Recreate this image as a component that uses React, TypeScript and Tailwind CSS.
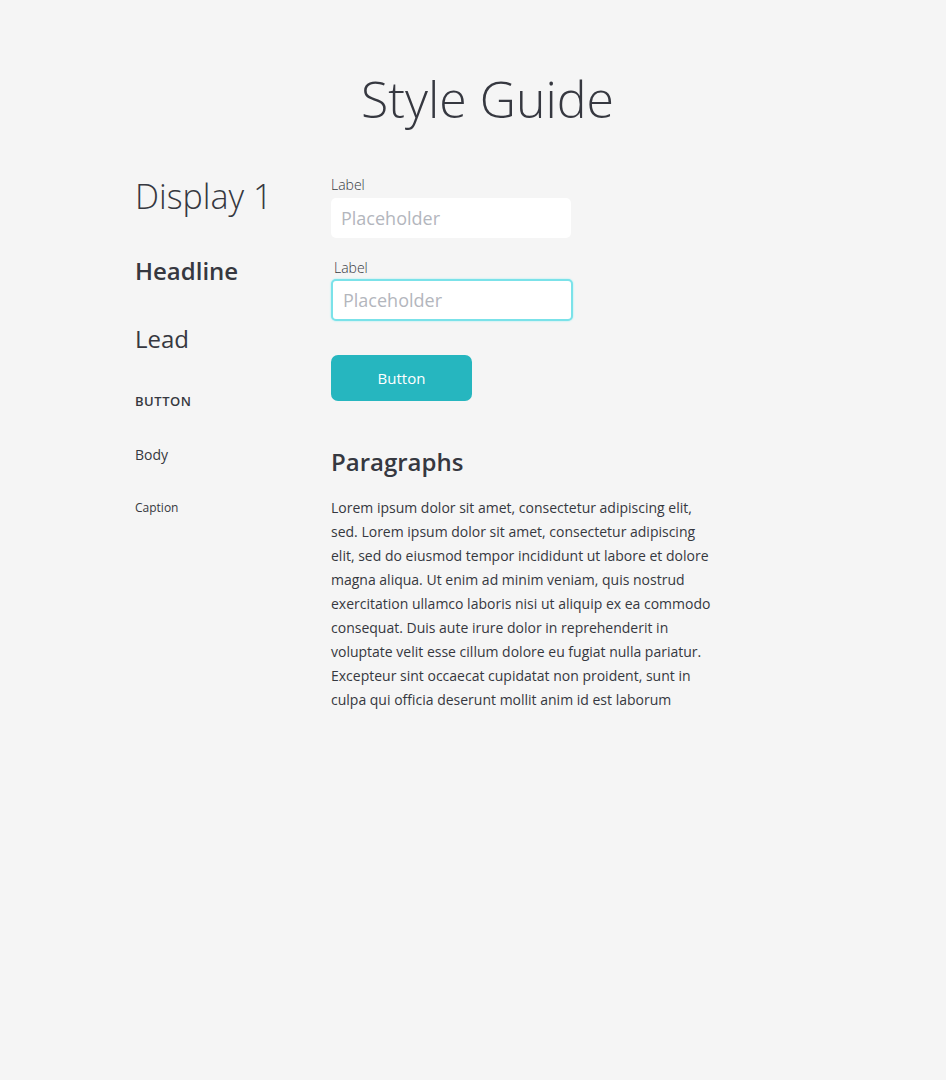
const lorem =
  "Lorem ipsum dolor sit amet, consectetur adipiscing elit, sed. Lorem ipsum dolor sit amet, consectetur adipiscing elit, sed do eiusmod tempor incididunt ut labore et dolore magna aliqua. Ut enim ad minim veniam, quis nostrud exercitation ullamco laboris nisi ut aliquip ex ea commodo consequat. Duis aute irure dolor in reprehenderit in voluptate velit esse cillum dolore eu fugiat nulla pariatur. Excepteur sint occaecat cupidatat non proident, sunt in culpa qui officia deserunt mollit anim id est laborum"

const TypeScale = () => (
  <div className="w-[196px] shrink-0">
    <div className="mt-[1px] text-[34px] leading-[40px] font-light">Display 1</div>
    <div className="mt-[39px] text-[24px] leading-[32px] font-semibold">Headline</div>
    <div className="mt-[36px] text-[24px] leading-[32px] font-normal">Lead</div>
    <div className="mt-[36px] text-[13px] leading-[20px] font-semibold tracking-[0.04em]">BUTTON</div>
    <div className="mt-[34px] text-[14px] leading-[20px] font-normal">Body</div>
    <div className="mt-[33px] text-[12px] leading-[20px] font-normal">Caption</div>
  </div>
)

export default function App() {
  return (
    <div
      className="min-h-screen bg-[#f5f5f5] text-[#363840] pl-[135px]"
      style={{ fontFamily: '"Open Sans", "Noto Sans", sans-serif' }}
    >
      <div className="w-[705px] pt-[71px]">
        <h1 className="text-center text-[50px] leading-[56px] font-light">Style Guide</h1>

        <div className="flex mt-[48px]">
          <TypeScale />

          <div className="flex flex-col">
            <label className="text-[14px] leading-[20px] font-light">Label</label>
            <input
              placeholder="Placeholder"
              className="mt-[3px] w-[240px] h-[40px] rounded-[5px] bg-white px-[10px] text-[18px] font-normal placeholder:text-[#b3b6bd] outline-none"
            />

            <label className="mt-[20px] ml-[3px] text-[14px] leading-[20px] font-light">Label</label>
            <input
              placeholder="Placeholder"
              className="mt-[1px] w-[242px] h-[42px] rounded-[5px] bg-white border-2 border-[#7be2e9] shadow-[0_0_2px_#9aeef3] px-[10px] text-[18px] font-normal placeholder:text-[#b3b6bd] outline-none"
            />

            <button className="mt-[34px] w-[141px] h-[46px] rounded-[7px] bg-[#26b6bf] text-white text-[15px] font-normal">
              Button
            </button>

            <h2 className="mt-[45px] text-[24px] leading-[32px] font-semibold">Paragraphs</h2>
            <p className="mt-[18px] w-[386px] text-[14px] leading-[24px] font-normal">{lorem}</p>
          </div>
        </div>
      </div>
    </div>
  )
}
